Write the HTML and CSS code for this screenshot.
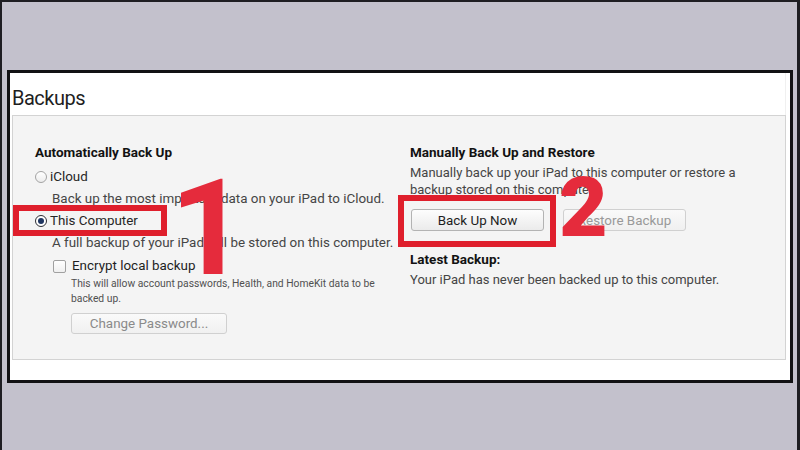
FILE: index.html
```html
<!DOCTYPE html>
<html lang="en">
<head>
<meta charset="utf-8">
<title>Backups</title>
<link rel="stylesheet" href="styles.css">
</head>
<body>
<div class="frame">
  <div class="panel">
    <div class="title">Backups</div>
    <div class="box">
      <div class="col">
        <div class="heading">Automatically Back Up</div>
        <div class="opt opt-first"><span class="radio"></span><span>iCloud</span></div>
        <div class="desc">Back up the most important data on your iPad to iCloud.</div>
        <div class="opt"><span class="radio on"></span><span>This Computer</span></div>
        <div class="desc">A full backup of your iPad will be stored on this computer.</div>
        <div class="check-row"><span class="check"></span><span>Encrypt local backup</span></div>
        <div class="small">This will allow account passwords, Health, and HomeKit data to be<br>backed up.</div>
        <div class="btn btn-off btn-pw">Change Password...</div>
      </div>
      <div class="col">
        <div class="heading">Manually Back Up and Restore</div>
        <div class="rdesc">Manually back up your iPad to this computer or restore a<br>backup stored on this computer.</div>
        <div class="btn-row">
          <div class="btn btn-now">Back Up Now</div>
          <div class="btn btn-off btn-restore">Restore Backup</div>
        </div>
        <div class="heading heading-latest">Latest Backup:</div>
        <div class="latest">Your iPad has never been backed up to this computer.</div>
      </div>
    </div>
  </div>
  <div class="mark mark-1"></div>
  <div class="mark mark-2"></div>
  <div class="num num-1">1</div>
  <div class="num num-2">2</div>
</div>
</body>
</html>
```
FILE: styles.css
```css
body {
  margin: 0;
}

.frame {
  position: relative;
  width: 800px;
  height: 450px;
  box-sizing: border-box;
  border-top: 2px solid #1e1e22;
  border-left: 2px solid #1e1e22;
  border-right: 3px solid #1e1e22;
  background: #c3c1cc;
  padding-top: 68px;
  padding-left: 5px;
  font-family: Roboto, "Noto Sans", sans-serif;
}

.panel {
  width: 786px;
  height: 313px;
  box-sizing: border-box;
  border: 3px solid #121214;
  background: #fff;
}

.title {
  height: 42px;
  box-sizing: border-box;
  padding: 12px 0 0 2px;
  margin-right: 4px;
  border-right: 1px solid #f0f0f0;
  font-size: 20px;
  line-height: 26px;
  letter-spacing: -0.5px;
  color: #1e1e1e;
}

.box {
  margin: 0 4px 0 2px;
  height: 245px;
  box-sizing: border-box;
  border: 1px solid #d3d3d3;
  background: #f4f4f4;
  padding: 26px 0 0 22px;
  display: grid;
  grid-template-columns: 375px 1fr;
  align-items: start;
}

.col {
  display: flex;
  flex-direction: column;
  align-items: flex-start;
}

.heading {
  font-weight: 700;
  font-size: 13.5px;
  line-height: 20px;
  color: #121212;
}

.opt {
  display: flex;
  align-items: center;
  gap: 3px;
  height: 20px;
  margin-top: 2px;
  font-size: 13.4px;
  line-height: 20px;
  color: #262626;
}

.opt-first {
  margin-top: 5px;
}

.radio {
  width: 12px;
  height: 12px;
  box-sizing: border-box;
  border: 1px solid #a3a3a3;
  border-radius: 50%;
  background: linear-gradient(#ffffff, #ececec);
  display: flex;
  align-items: center;
  justify-content: center;
}

.radio.on {
  border-color: #2e2e34;
  background: #fff;
}

.radio.on::after {
  content: "";
  width: 6px;
  height: 6px;
  border-radius: 50%;
  background: #1f3560;
}

.desc {
  margin: 2px 0 0 17px;
  font-size: 13.4px;
  line-height: 20px;
  color: #454545;
}

.check-row {
  display: flex;
  align-items: center;
  gap: 6px;
  height: 18px;
  margin: 4px 0 0 18px;
  font-size: 13.4px;
  line-height: 18px;
  color: #1e1e1e;
}

.check {
  width: 13px;
  height: 13px;
  box-sizing: border-box;
  border: 1px solid #a0a0a0;
  border-radius: 2px;
  background: linear-gradient(#ffffff, #efefef);
}

.small {
  margin: 0.5px 0 0 36px;
  font-size: 10.3px;
  line-height: 15px;
  color: #505050;
}

.btn {
  box-sizing: border-box;
  height: 22px;
  padding-top: 2px;
  border: 1px solid #b3b3b3;
  border-radius: 3px;
  background: linear-gradient(#fdfdfd, #ebebeb);
  font-size: 13.4px;
  line-height: 18px;
  text-align: center;
  color: #1e1e1e;
}

.btn-off {
  border-color: #d0d0d0;
  background: linear-gradient(#fafafa, #f0f0f0);
  color: #999;
}

.btn-pw {
  width: 156px;
  height: 21px;
  padding-top: 0;
  line-height: 19px;
  margin: 7.5px 0 0 36px;
  color: #8a8a8a;
}

.rdesc {
  margin-top: 1.6px;
  font-size: 13px;
  line-height: 17px;
  color: #454545;
}

.btn-row {
  display: flex;
  gap: 19px;
  margin: 11.4px 0 0 1px;
}

.btn-now {
  width: 133px;
}

.btn-restore {
  width: 123px;
}

.heading-latest {
  margin-top: 17.7px;
}

.latest {
  margin-top: 1.7px;
  font-size: 13px;
  line-height: 20px;
  color: #454545;
}

/* annotation overlays */
.mark {
  position: absolute;
  box-sizing: border-box;
  border: 6px solid #df1f2c;
}

.mark-1 {
  left: 11px;
  top: 203px;
  width: 154px;
  height: 31px;
}

.mark-2 {
  left: 396px;
  top: 193px;
  width: 158px;
  height: 52px;
}

.num {
  position: absolute;
  font-family: Roboto, "Liberation Sans", sans-serif;
  line-height: 1;
  color: #e52b3c;
}

.num-1 {
  left: 168px;
  top: 160px;
  font-size: 134px;
  font-weight: 700;
}

.num-2 {
  left: 557px;
  top: 164px;
  font-size: 84px;
  font-weight: 900;
}
```
